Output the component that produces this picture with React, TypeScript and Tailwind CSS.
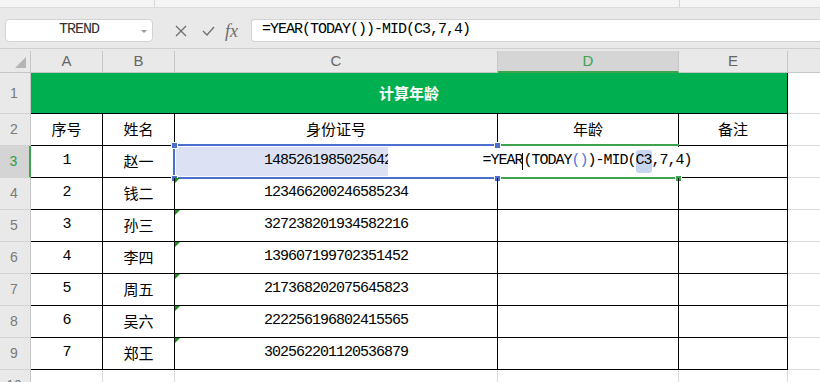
import type { ReactNode } from "react";

interface Person {
  no: string;
  name: string;
  id: string;
}

const people: Person[] = [
  { no: "1", name: "赵一", id: "148526198502564212" },
  { no: "2", name: "钱二", id: "123466200246585234" },
  { no: "3", name: "孙三", id: "327238201934582216" },
  { no: "4", name: "李四", id: "139607199702351452" },
  { no: "5", name: "周五", id: "217368202075645823" },
  { no: "6", name: "吴六", id: "222256196802415565" },
  { no: "7", name: "郑王", id: "302562201120536879" },
];

const cjk = "font-['Noto_Sans_CJK_SC',sans-serif] text-[15px] text-black";
const mono = "font-['Liberation_Mono','Noto_Sans_CJK_SC',monospace] text-[15px] tracking-[-1px]";
const cell = "flex shrink-0 items-center justify-center border-r border-b border-black";

function RowHead({ label, active }: { label: string; active?: boolean }) {
  return (
    <div
      className={`flex w-[31px] shrink-0 items-center justify-center border-b border-b-[#d3d3d3] pr-[2px] font-['Liberation_Sans',sans-serif] text-[14px] ${
        active
          ? "border-r-2 border-r-[#3fa34d] bg-[#d4d4d4] text-[#2f9e44]"
          : "border-r border-r-[#c6c6c6] bg-[#e9e9e9] text-[#7a7a7a]"
      }`}
    >
      {label}
    </div>
  );
}

function Row({
  label,
  active,
  tall,
  overlay,
  children,
}: {
  label: string;
  active?: boolean;
  tall?: boolean;
  overlay?: ReactNode;
  children: ReactNode;
}) {
  return (
    <div className={`relative flex ${tall ? "h-[41px]" : "h-[32px]"}`}>
      <RowHead label={label} active={active} />
      {children}
      <div className="flex-1 border-b border-[#d9d9d9]" />
      {overlay}
    </div>
  );
}

function Tri() {
  return <div className="absolute left-0 top-0 h-0 w-0 border-r-[5px] border-t-[5px] border-r-transparent border-t-[#1c8a1c]" />;
}

function Handle({ pos, green }: { pos: string; green?: boolean }) {
  return (
    <div
      className={`absolute h-[7px] w-[7px] border border-white ${green ? "bg-[#3fa34d]" : "bg-[#4a6fd0]"} ${pos}`}
    />
  );
}

function Editing() {
  return (
    <>
      <div className="absolute left-[173px] top-[-2px] h-[35px] w-[326px] border-2 border-[#4a6fd0] shadow-[inset_0_0_0_1px_#fff]" />
      <div className="absolute left-[500px] top-[-2px] h-[2px] w-[179px] bg-[#3fa34d]" />
      <div className="absolute left-[500px] top-[31px] h-[2px] w-[179px] bg-[#3fa34d]" />
      <div className={`absolute left-[388px] top-[1px] flex h-[29px] w-[398px] items-center justify-center bg-white text-black ${mono}`}>
        <span>=YEAR</span>
        <span className="inline-block h-[17px] w-px bg-black" />
        <span>(TODAY</span>
        <span className="text-[#4a78d6]">()</span>
        <span>)-MID(</span>
        <span className="rounded-[3px] bg-[#c8d5f0]">C3</span>
        <span>,7,4)</span>
      </div>
      <Handle pos="left-[171px] top-[-4px]" />
      <Handle pos="left-[171px] top-[29px]" />
      <Handle pos="left-[494px] top-[-4px]" />
      <Handle pos="left-[494px] top-[29px]" />
      <Handle pos="left-[675px] top-[29px]" green />
    </>
  );
}

export default function App() {
  const colHeads = [
    { l: "A", w: "w-[72px]" },
    { l: "B", w: "w-[72px]" },
    { l: "C", w: "w-[323px]" },
    { l: "D", w: "w-[181px]", active: true },
    { l: "E", w: "w-[109px]" },
  ];

  return (
    <div className="h-[382px] w-[820px] overflow-hidden bg-white">
      {/* ribbon edge */}
      <div className="flex h-[8px] border-b border-[#dcdcdc] bg-[#f5f5f5]">
        <div className="w-[154px]" />
        <div className="w-px bg-[#d6d6d6]" />
        <div className="w-[524px]" />
        <div className="w-px bg-[#d6d6d6]" />
      </div>

      {/* name box + formula bar */}
      <div className="flex h-[40px] items-start bg-[#e9e9e9] pl-[5px] pt-[11px]">
        <div className="relative flex h-[23px] w-[148px] items-center justify-center rounded-[4px] border border-[#d3d3d3] bg-white">
          <span className={`${mono} text-[#333]`}>TREND</span>
          <div className="absolute right-[5px] top-[10px] h-0 w-0 border-x-[3px] border-t-[3px] border-x-transparent border-t-[#9a9a9a]" />
        </div>
        <div className="flex h-[23px] w-[98px] items-center">
          <svg className="ml-[22px]" width="12" height="12" viewBox="0 0 12 12">
            <path d="M1 1L11 11M11 1L1 11" stroke="#6e6e6e" strokeWidth="1.3" fill="none" />
          </svg>
          <svg className="ml-[15px]" width="13" height="10" viewBox="0 0 13 10">
            <path d="M1 5L5 9L12 1" stroke="#6e6e6e" strokeWidth="1.3" fill="none" />
          </svg>
          <span className="ml-[10px] font-['Liberation_Serif',serif] text-[18px] italic leading-none text-[#6e6e6e]">fx</span>
        </div>
        <div className="flex h-[23px] flex-1 items-center rounded-l-[4px] border border-r-0 border-[#d3d3d3] bg-white pl-[10px]">
          <span className={`${mono} text-black`}>=YEAR(TODAY())-MID(C3,7,4)</span>
        </div>
      </div>

      {/* column headers */}
      <div className="flex h-[25px] border-t border-[#cfcfcf] bg-[#e9e9e9] pt-[2px] font-['Liberation_Sans',sans-serif] text-[15px]">
        <div className="flex w-[31px] shrink-0 items-end justify-end border-r border-b border-[#c6c6c6] pb-[4px] pr-[4px]">
          <div className="h-0 w-0 border-b-[11px] border-l-[11px] border-b-[#b5b5b5] border-l-transparent" />
        </div>
        {colHeads.map((c) => (
          <div
            key={c.l}
            className={`flex shrink-0 items-center justify-center border-r border-[#c6c6c6] ${c.w} ${
              c.active
                ? "border-b-2 border-b-[#3fa34d] bg-[#d5d5d5] text-[#3fa34d]"
                : "border-b border-b-[#c6c6c6] text-[#666]"
            }`}
          >
            {c.l}
          </div>
        ))}
        <div className="flex-1 border-b border-[#c6c6c6]" />
      </div>

      {/* row 1: title */}
      <Row label="1" tall>
        <div className={`${cell} w-[757px] bg-[#00b050]`}>
          <span className="font-['Noto_Sans_CJK_SC',sans-serif] text-[15px] font-bold text-white">计算年龄</span>
        </div>
      </Row>

      {/* row 2: header */}
      <Row label="2">
        <div className={`${cell} ${cjk} w-[72px]`}>序号</div>
        <div className={`${cell} ${cjk} w-[72px]`}>姓名</div>
        <div className={`${cell} ${cjk} w-[323px]`}>身份证号</div>
        <div className={`${cell} ${cjk} w-[181px]`}>年龄</div>
        <div className={`${cell} ${cjk} w-[109px]`}>备注</div>
      </Row>

      {people.map((p, i) => (
        <Row key={p.no} label={String(i + 3)} active={i === 0} overlay={i === 0 ? <Editing /> : null}>
          <div className={`${cell} ${mono} w-[72px] text-black`}>{p.no}</div>
          <div className={`${cell} ${cjk} w-[72px]`}>{p.name}</div>
          <div className={`${cell} relative w-[323px] overflow-hidden ${i === 0 ? "bg-[#dce2f4]" : ""}`}>
            {i > 0 && <Tri />}
            <span className={`${mono} text-black`}>{p.id}</span>
          </div>
          <div className={`${cell} w-[181px]`} />
          <div className={`${cell} w-[109px]`} />
        </Row>
      ))}

      {/* row 10 */}
      <Row label="10">
        <div className="w-[72px] shrink-0 border-r border-b border-[#d9d9d9]" />
        <div className="w-[72px] shrink-0 border-r border-b border-[#d9d9d9]" />
        <div className="w-[323px] shrink-0 border-r border-b border-[#d9d9d9]" />
        <div className="w-[181px] shrink-0 border-r border-b border-[#d9d9d9]" />
        <div className="w-[109px] shrink-0 border-r border-b border-[#d9d9d9]" />
      </Row>
    </div>
  );
}
